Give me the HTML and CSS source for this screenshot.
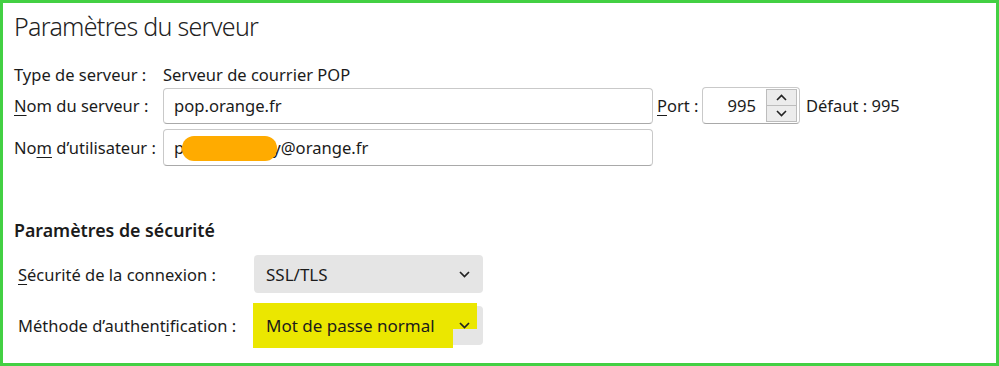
FILE: index.html
```html
<!DOCTYPE html>
<html lang="fr">
<head>
  <meta charset="UTF-8" />
  <title>Paramètres du serveur</title>
  <link rel="stylesheet" href="styles.css">
</head>
<body>
  <div class="frame">
    <h1 class="title">Paramètres du serveur</h1>

    <!-- Serveur -->
    <div class="row row-type">
      <span class="label">Type de serveur :</span>
      <span class="value">Serveur de courrier POP</span>
    </div>
    <div class="row row-server">
      <span class="label"><u>N</u>om du serveur :</span>
      <div class="field field-wide">pop.orange.fr</div>
      <span class="port-label"><u>P</u>ort :</span>
      <div class="field field-port">
        <span class="port-num">995</span>
        <div class="spin">
          <div class="spin-btn">
            <svg width="11" height="7" viewBox="0 0 11 7"><path d="M1 6 L5.5 1.5 L10 6" fill="none" stroke="#222" stroke-width="1.6"/></svg>
          </div>
          <div class="spin-btn">
            <svg width="11" height="7" viewBox="0 0 11 7"><path d="M1 1 L5.5 5.5 L10 1" fill="none" stroke="#222" stroke-width="1.6"/></svg>
          </div>
        </div>
      </div>
      <span class="default">Défaut : 995</span>
    </div>
    <div class="row row-user">
      <span class="label">No<u>m</u> d’utilisateur :</span>
      <div class="field field-wide field-user">p<span class="gap"></span>y@orange.fr<span class="blot"></span></div>
    </div>

    <!-- Sécurité -->
    <h2 class="section">Paramètres de sécurité</h2>
    <div class="row row-sec">
      <span class="label label-sec"><u>S</u>écurité de la connexion :</span>
      <div class="select">
        <span class="select-text">SSL/TLS</span>
        <svg class="chev" width="11" height="7" viewBox="0 0 11 7"><path d="M1 1 L5.5 5.5 L10 1" fill="none" stroke="#222" stroke-width="1.7"/></svg>
      </div>
    </div>
    <div class="row row-auth">
      <span class="label label-sec">Méthode d’authent<u>i</u>fication :</span>
      <div class="select">
        <span class="mark mark-a"></span>
        <span class="mark mark-b"></span>
        <span class="select-text">Mot de passe normal</span>
        <svg class="chev" width="11" height="7" viewBox="0 0 11 7"><path d="M1 1 L5.5 5.5 L10 1" fill="none" stroke="#222" stroke-width="1.7"/></svg>
      </div>
    </div>
  </div>
</body>
</html>
```

FILE: styles.css
```css
html, body {
  margin: 0; padding: 0;
  background: #fff;
  color: #1b1b1b;
  font-family: 'Noto Sans', 'Open Sans', sans-serif;
  font-size: 16.5px;
}
.frame {
  width: 999px;
  height: 366px;
  box-sizing: border-box;
  border: 3px solid #43d043;
  padding: 6px 0 0 11px;
}
.title {
  margin: 0;
  font-size: 25px;
  line-height: 34px;
  font-weight: 300;
  letter-spacing: -0.7px;
  color: #222;
}
.row {
  display: flex;
  align-items: center;
}
u {
  text-decoration-thickness: 1px;
  text-underline-offset: 3px;
}
.label {
  width: 149px;
  flex: none;
  white-space: nowrap;
}
.row-type {
  margin-top: 20px;
  height: 22px;
}
.row-server {
  margin-top: 2px;
}
.row-user {
  margin-top: 5px;
}

/* Champs texte */
.field {
  box-sizing: border-box;
  height: 36px;
  border: 1px solid #c9c9c9;
  border-bottom-color: #a9a9a9;
  border-radius: 4px;
  display: flex;
  align-items: center;
  font-size: 16.6px;
}
.field-wide {
  width: 490px;
  padding-left: 10px;
}
.field-user {
  height: 37px;
  position: relative;
}
.gap {
  display: inline-block;
  width: 88px;
}
.blot {
  position: absolute;
  left: 18px;
  top: 6px;
  width: 95px;
  height: 25px;
  border-radius: 12px;
  background: #ffab00;
}
.port-label {
  margin-left: 4px;
  width: 45px;
}
.field-port {
  width: 98px;
  height: 37px;
  justify-content: flex-end;
  padding: 1px 2px 1px 1px;
}
.port-num {
  margin-right: 10px;
}
.spin {
  width: 31px;
  height: 33px;
  display: flex;
  flex-direction: column;
  border: 1px solid #bdbdbd;
  box-sizing: border-box;
  background: #ececec;
}
.spin-btn {
  flex: 1;
  display: flex;
  align-items: center;
  justify-content: center;
}
.spin-btn + .spin-btn {
  border-top: 1px solid #bdbdbd;
}
.default {
  margin-left: 6px;
}

/* Section sécurité */
.section {
  margin: 52px 0 0 0;
  font-size: 17.8px;
  line-height: 24px;
  font-weight: 600;
}
.row-sec {
  margin-top: 13px;
}
.row-auth {
  margin-top: 13px;
}
.label-sec {
  width: 240px;
  padding-left: 4px;
  box-sizing: border-box;
}
.select {
  position: relative;
  width: 229px;
  height: 38px;
  border-radius: 4px;
  background: #e5e5e5;
  display: flex;
  align-items: center;
  justify-content: space-between;
  padding: 0 13px 0 12px;
  box-sizing: border-box;
  font-size: 17px;
}
.row-auth .select {
  height: 39px;
}
.select-text, .chev {
  position: relative;
  z-index: 1;
}
.mark {
  position: absolute;
  background: #ebe700;
}
.mark-a {
  left: -1px;
  top: -3px;
  width: 224px;
  height: 26px;
}
.mark-b {
  left: -1px;
  top: -3px;
  width: 200px;
  height: 45px;
}
```
